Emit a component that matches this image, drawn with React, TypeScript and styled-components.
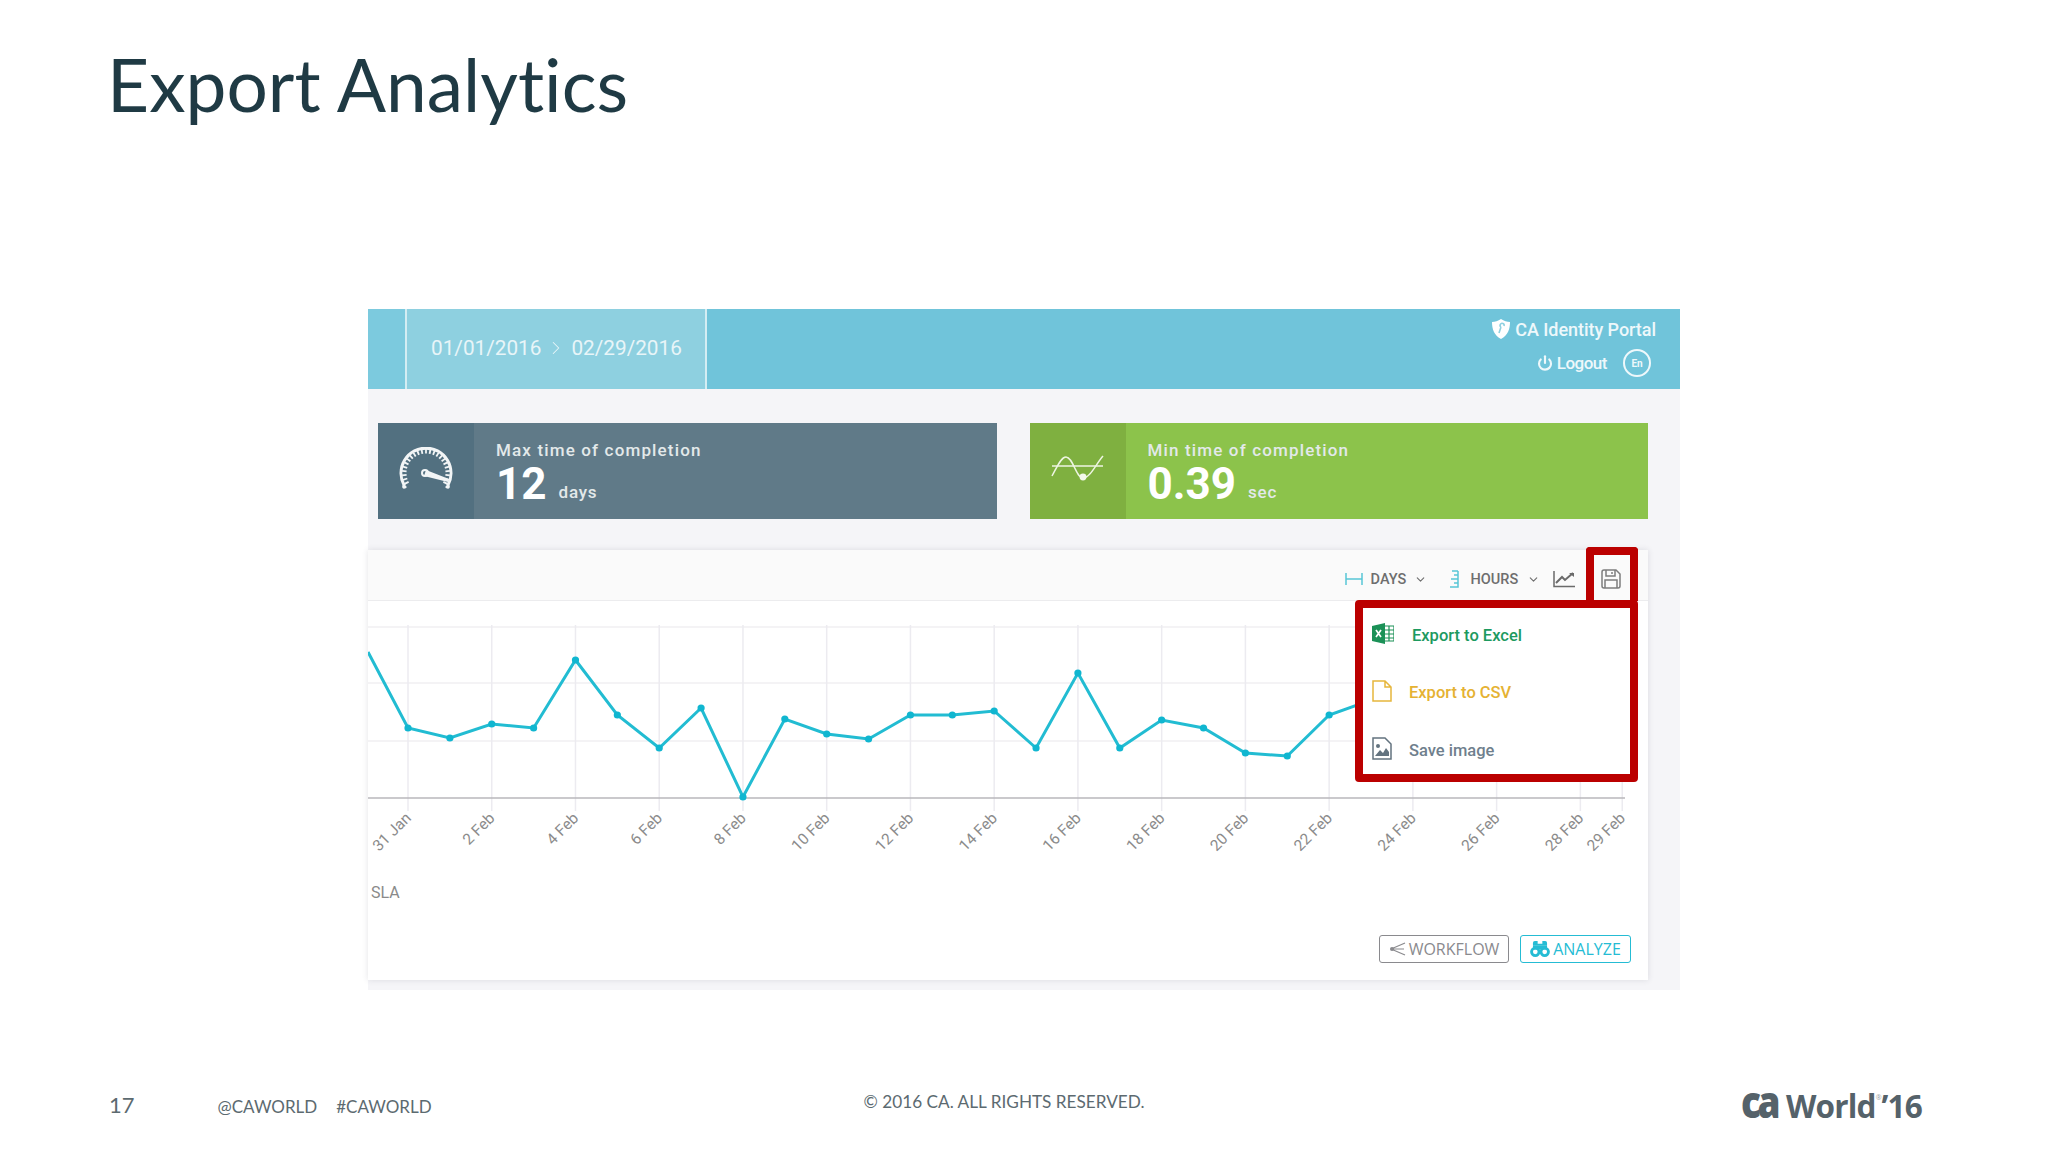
import React from "react";
import styled, { createGlobalStyle } from "styled-components";
import { ChevronDown, ChevronRight, Power } from "lucide-react";

const GlobalStyle = createGlobalStyle`
  html, body {
    margin: 0;
    padding: 0;
    background: #fff;
  }
`;

const Page = styled.div`
  width: 2048px;
  height: 1152px;
  overflow: hidden;
  display: flex;
  flex-direction: column;
  font-family: Roboto, sans-serif;
`;

const Title = styled.h1`
  margin: 36px 0 0 107px;
  font-family: Lato, sans-serif;
  font-size: 73px;
  line-height: 96px;
  font-weight: 400;
  font-variant-ligatures: none;
  color: #1f3a44;
`;

const Panel = styled.section`
  margin: 177px 0 0 368px;
  width: 1312px;
  height: 681px;
  background: #f5f5f8;
  display: flex;
  flex-direction: column;
`;

const TopBar = styled.header`
  height: 80px;
  flex: none;
  display: flex;
  justify-content: space-between;
  background: linear-gradient(to right, #7ccade 37px, #70c4da 37px);
  color: #eef8fb;
`;

const DateRange = styled.div`
  margin-left: 37px;
  width: 302px;
  box-sizing: border-box;
  padding: 0 0 2px 24px;
  display: flex;
  align-items: center;
  gap: 4px;
  background: #8ed0e0;
  border-left: 2px solid #d3edf3;
  border-right: 2px solid #d3edf3;
  font-size: 20.75px;
  color: #e8f5f8;
`;

const Account = styled.div`
  display: flex;
  flex-direction: column;
  align-items: flex-end;
  padding: 7px 24px 0 0;
  font-weight: 500;
`;

const AccountRow = styled.div<{ $top?: number; $right?: number; $size: number; $track: number }>`
  display: flex;
  align-items: center;
  gap: 4px;
  margin-top: ${(p) => p.$top ?? 0}px;
  margin-right: ${(p) => p.$right ?? 0}px;
  height: 26px;
  font-size: ${(p) => p.$size}px;
  letter-spacing: ${(p) => p.$track}px;
`;

const LangBadge = styled.span`
  width: 28px;
  height: 28px;
  box-sizing: border-box;
  margin-left: 12px;
  border: 2px solid #eef8fb;
  border-radius: 50%;
  display: flex;
  align-items: center;
  justify-content: center;
  font-size: 10px;
  font-weight: 700;
  letter-spacing: 0;
`;

const Stats = styled.div`
  display: flex;
  gap: 33px;
  margin: 34px 32px 0 10px;
  height: 96px;
  flex: none;
`;

const StatCard = styled.div<{ $bg: string }>`
  flex: 1;
  display: flex;
  background: ${(p) => p.$bg};
  color: #fff;
`;

const StatIcon = styled.div<{ $bg: string }>`
  width: 96px;
  display: flex;
  align-items: center;
  justify-content: center;
  background: ${(p) => p.$bg};
`;

const StatBody = styled.div`
  padding: 16px 0 0 22px;
`;

const StatLabel = styled.div`
  font-size: 17px;
  line-height: 22px;
  font-weight: 500;
  letter-spacing: 1.15px;
  color: #e3e9ea;
`;

const StatValue = styled.div`
  margin-top: 2px;
  display: flex;
  align-items: flex-end;
  gap: 12px;
  font-size: 44px;
  line-height: 42px;
  font-weight: 700;
`;

const StatUnit = styled.span`
  margin-bottom: 3px;
  font-size: 17px;
  line-height: 20px;
  font-weight: 500;
  letter-spacing: 0.8px;
  color: #e3e9ea;
`;

const ChartCard = styled.div`
  position: relative;
  margin: 31px 32px 0 0;
  height: 430px;
  flex: none;
  background: #fff;
  box-shadow: 0 0 6px rgba(60, 60, 80, 0.14);
  display: flex;
  flex-direction: column;
`;

const Toolbar = styled.div`
  height: 42px;
  padding: 8px 27px 0 0;
  flex: none;
  display: flex;
  align-items: center;
  justify-content: flex-end;
  background: #fafafa;
  border-bottom: 1px solid #ececee;
`;

const ToolGroup = styled.div<{ $left: number }>`
  display: flex;
  align-items: center;
  gap: 7.5px;
  margin-left: ${(p) => p.$left}px;
  font-size: 14.5px;
  font-weight: 500;
  color: #6e6e6e;
`;

const ToolLabel = styled.span<{ $left?: number; $right?: number }>`
  margin-left: ${(p) => p.$left ?? 0}px;
  margin-right: ${(p) => p.$right ?? 0}px;
`;

const ChartSvg = styled.svg`
  display: block;
  flex: none;
`;

const Sla = styled.div`
  height: 34px;
  line-height: 34px;
  flex: none;
  padding-left: 3px;
  font-size: 16px;
  color: #8a8a8a;
`;

const Actions = styled.div`
  display: flex;
  justify-content: flex-end;
  gap: 11px;
  margin-top: 25px;
  padding-right: 17px;
`;

const ActionButton = styled.button<{ $color: string; $width: number }>`
  width: ${(p) => p.$width}px;
  height: 28px;
  box-sizing: border-box;
  padding: 0;
  display: flex;
  align-items: center;
  justify-content: center;
  gap: 3px;
  background: #fff;
  border: 1.5px solid ${(p) => p.$color};
  border-radius: 3px;
  font-family: "Open Sans", sans-serif;
  font-size: 16px;
  color: ${(p) => p.$color};
`;

const SaveHighlight = styled.div`
  position: absolute;
  left: 1218px;
  top: -3px;
  width: 52px;
  height: 54px;
  box-sizing: border-box;
  border: 8px solid #bb0000;
  border-bottom: 0;
  border-radius: 4px 4px 0 0;
`;

const ExportMenu = styled.div`
  position: absolute;
  left: 987px;
  top: 50px;
  width: 283px;
  height: 182px;
  box-sizing: border-box;
  background: #fff;
  border: 8.5px solid #bb0000;
  border-radius: 4px;
  display: flex;
  flex-direction: column;
  gap: 3.5px;
`;

const MenuItem = styled.div<{ $color: string; $gap: number }>`
  height: 54px;
  flex: none;
  display: flex;
  align-items: center;
  gap: ${(p) => p.$gap}px;
  padding-left: 9px;
  font-size: 16.5px;
  font-weight: 500;
  color: ${(p) => p.$color};

  svg {
    margin-bottom: 4px;
  }
`;

const Footer = styled.footer`
  margin-top: 94px;
  padding-right: 126px;
  height: 40px;
  display: flex;
  align-items: center;
  font-family: Lato, sans-serif;
  color: #5c6a70;
`;

const PageNumber = styled.span`
  margin-left: 109px;
  font-size: 22px;
`;

const Handle = styled.span<{ $left: number }>`
  margin-left: ${(p) => p.$left}px;
  padding-top: 4px;
  font-size: 17px;
`;

const Copyright = styled.span`
  margin-left: 432px;
  font-size: 17.2px;
  padding-bottom: 6px;
`;

const Logo = styled.div`
  margin-left: auto;
  padding-bottom: 6px;
  display: flex;
  align-items: baseline;
  font-family: "Open Sans", sans-serif;
  font-weight: 700;
  font-size: 31.5px;
  letter-spacing: -0.8px;
  color: #55626a;
`;

const LogoMark = styled.span`
  display: inline-block;
  font-weight: 800;
  font-size: 44px;
  letter-spacing: -4px;
  margin-right: 9px;
  transform: scaleX(0.84);
  transform-origin: right bottom;
`;

const Registered = styled.sup`
  font-size: 7px;
  font-weight: 400;
  line-height: 0;
  vertical-align: 18px;
  letter-spacing: 0;
  color: #9aa2a6;
`;

const LEFT = 368;
const TOP = 601;
const STEP = 41.87;
const values = [
  728, 738, 724, 728, 660, 715, 748, 708, 797, 719, 734, 739, 715, 715, 711, 748,
  673, 748, 720, 728, 753, 756, 715, 700, 720, 735, 710, 725, 740, 730,
];
const gridRows = [627, 683, 741];
const tickLabels = [
  "31 Jan", "2 Feb", "4 Feb", "6 Feb", "8 Feb", "10 Feb", "12 Feb", "14 Feb",
  "16 Feb", "18 Feb", "20 Feb", "22 Feb", "24 Feb", "26 Feb", "28 Feb",
];

const dayX = (i: number) => 408 - LEFT + STEP * i;

const Chart = () => {
  const line = values.map((v, i) => `${dayX(i)},${v - TOP}`).join(" ");
  const ticks = [...tickLabels.map((t, i) => ({ t, i: i * 2 })), { t: "29 Feb", i: 29 }];
  return (
    <ChartSvg width="1280" height="275" viewBox="0 0 1280 275">
      {gridRows.map((y) => (
        <line key={y} x1="0" x2="1265" y1={y - TOP} y2={y - TOP} stroke="#e9e8ec" strokeWidth="1.2" />
      ))}
      {ticks.map(({ i }) => (
        <line key={i} x1={dayX(i)} x2={dayX(i)} y1={24} y2={210} stroke="#ecebf0" strokeWidth="1.5" />
      ))}
      <line x1="0" x2="1257" y1={197} y2={197} stroke="#b9b7bb" strokeWidth="1.6" />
      <polyline points={`0,51 ${line}`} fill="none" stroke="#22bcd2" strokeWidth="3" />
      {values.map((v, i) => (
        <circle key={i} cx={dayX(i)} cy={v - TOP} r="3.6" fill="#10b6d0" />
      ))}
      {ticks.map(({ t, i }) => (
        <text
          key={t}
          x={dayX(i) + 4}
          y={218}
          transform={`rotate(-45 ${dayX(i) + 4} 218)`}
          textAnchor="end"
          fontFamily="Roboto, sans-serif"
          fontSize="15.5"
          fill="#8b8b8b"
        >
          {t}
        </text>
      ))}
    </ChartSvg>
  );
};

const GaugeIcon = () => {
  const marks = Array.from({ length: 23 }, (_, i) => -207 + (i * 234) / 22);
  return (
    <svg width="56" height="48" viewBox="-28 -26 56 48" fill="none" stroke="#f2f5f6">
      <path d="M-21 14 Q-23 15 -22 12 A25 25 0 1 1 22 12 Q23 15 21 14" strokeWidth="3" strokeLinecap="round" />
      {marks.map((a) => {
        const r = (a * Math.PI) / 180;
        return (
          <line
            key={a}
            x1={Math.cos(r) * 24}
            y1={Math.sin(r) * 24}
            x2={Math.cos(r) * 19.5}
            y2={Math.sin(r) * 19.5}
            strokeWidth="1.8"
          />
        );
      })}
      <circle cx="-1" cy="0" r="3" strokeWidth="2" />
      <path d="M0 -3 L23 6 L22 9 L-2 3 Z" fill="#f2f5f6" stroke="none" />
    </svg>
  );
};

const WaveIcon = () => (
  <svg width="56" height="32" viewBox="0 0 56 32" fill="none" stroke="#eef5e2" strokeWidth="1.5">
    <path d="M2 21 C7 12 11 2 16 2 C23 2 26 23 33 23 C40 23 46 9 53 1" />
    <path d="M2 11 H53" />
    <circle cx="33" cy="22" r="3.4" fill="#f4f9ec" stroke="none" />
  </svg>
);

const ShieldIcon = () => (
  <svg width="20" height="20" viewBox="0 0 20 20">
    <path d="M10 0 C13 2 16 3 19 3 C19 10 17 16 10 20 C3 16 1 10 1 3 C4 3 7 2 10 0 Z" fill="#fff" />
    <path d="M8 14 L10 8 M10 8 A2 2 0 1 1 13 7" stroke="#8ed0e0" strokeWidth="1.6" fill="none" />
  </svg>
);

const DaysIcon = () => (
  <svg width="18" height="14" viewBox="0 0 18 14" fill="none" stroke="#58c6d6" strokeWidth="1.5">
    <path d="M1 1 V13 M17 1 V13 M1 7 H17" />
  </svg>
);

const HoursIcon = () => (
  <svg width="11" height="18" viewBox="0 0 11 18" fill="none" stroke="#58c6d6" strokeWidth="1.5">
    <path d="M10 1 V17 H2 M4 1 H10 M6 5 H10 M3 9 H10 M6 13 H10" />
  </svg>
);

const TrendIcon = () => (
  <svg width="22" height="18" viewBox="0 0 22 18" fill="none" stroke="#6a6a6a" strokeWidth="1.5">
    <path d="M1 1 V16.5 H22" />
    <path d="M3 13 L9 7 L12 10 L20 3" strokeWidth="2" />
    <path d="M16 3 H21 V7" fill="#6a6a6a" stroke="none" />
  </svg>
);

const SaveIcon = () => (
  <svg width="20" height="20" viewBox="0 0 20 20" fill="none" stroke="#7d7d7d" strokeWidth="1.5">
    <path d="M1 3 Q1 1 3 1 H15 L19 5 V17 Q19 19 17 19 H3 Q1 19 1 17 Z" />
    <path d="M5 1 V7 H14 V1 M11 3 V5" />
    <path d="M4 19 V11 H16 V19" />
  </svg>
);

const ExcelIcon = () => (
  <svg width="22" height="21" viewBox="0 0 22 21">
    <path d="M0 3 L13 0 V21 L0 18 Z" fill="#1b9157" />
    <path d="M4 7 L9 14 M9 7 L4 14" stroke="#fff" strokeWidth="1.7" />
    <path d="M13 3 H22 V18 H13 M13 7 H22 M13 11 H22 M13 15 H22 M17 3 V18" fill="none" stroke="#1b9157" strokeWidth="1.2" />
  </svg>
);

const CsvIcon = () => (
  <svg width="20" height="22" viewBox="0 0 20 22" fill="none" stroke="#e6b63c" strokeWidth="1.5">
    <path d="M1 1 H13 L19 7 V21 H1 Z M13 1 V7 H19" />
  </svg>
);

const ImageFileIcon = () => (
  <svg width="20" height="23" viewBox="0 0 20 23" fill="none" stroke="#63737f" strokeWidth="1.5">
    <path d="M1 1 H13 L19 7 V22 H1 Z" />
    <circle cx="6" cy="9" r="2" fill="#63737f" stroke="none" />
    <path d="M3 19 L8 13 L11 16 L14 11 L17 15 V19 Z" fill="#63737f" stroke="none" />
  </svg>
);

const BranchIcon = () => (
  <svg width="17" height="14" viewBox="0 0 17 14" fill="none" stroke="#8a8a8e" strokeWidth="1.2">
    <path d="M2 7 L16 1 M2 7 H15 M2 7 L16 13" />
    <circle cx="3" cy="7" r="2" fill="#8a8a8e" stroke="none" />
  </svg>
);

const BinocularsIcon = () => (
  <svg width="20" height="16" viewBox="0 0 21 17" fill="#25bcd4" fillRule="evenodd">
    <path d="M3 2 Q3 0 5 0 H8 V3 H13 V0 H16 Q18 0 18 2 L18 5 H3 Z" />
    <path d="M5.5 6 A5.5 5.5 0 1 1 5.5 17 A5.5 5.5 0 1 1 5.5 6 Z M5.5 9 A2.5 2.5 0 1 0 5.5 14 A2.5 2.5 0 1 0 5.5 9 Z" />
    <path d="M15.5 6 A5.5 5.5 0 1 1 15.5 17 A5.5 5.5 0 1 1 15.5 6 Z M15.5 9 A2.5 2.5 0 1 0 15.5 14 A2.5 2.5 0 1 0 15.5 9 Z" />
    <path d="M3 5 H18 V9 H3 Z" />
  </svg>
);

export default function App() {
  return (
    <Page>
      <GlobalStyle />
      <Title>Export Analytics</Title>
      <Panel>
        <TopBar>
          <DateRange>
            01/01/2016
            <ChevronRight size={22} strokeWidth={1.1} />
            02/29/2016
          </DateRange>
          <Account>
            <AccountRow $size={18} $track={-0.05}>
              <ShieldIcon />
              CA Identity Portal
            </AccountRow>
            <AccountRow $top={8} $right={5} $size={17} $track={-0.5}>
              <Power size={16} strokeWidth={3.2} />
              Logout
              <LangBadge>En</LangBadge>
            </AccountRow>
          </Account>
        </TopBar>

        <Stats>
          <StatCard $bg="#607a88">
            <StatIcon $bg="#527080">
              <GaugeIcon />
            </StatIcon>
            <StatBody>
              <StatLabel>Max time of completion</StatLabel>
              <StatValue>
                12 <StatUnit>days</StatUnit>
              </StatValue>
            </StatBody>
          </StatCard>
          <StatCard $bg="#8cc34b">
            <StatIcon $bg="#7fb040">
              <WaveIcon />
            </StatIcon>
            <StatBody>
              <StatLabel>Min time of completion</StatLabel>
              <StatValue>
                0.39 <StatUnit>sec</StatUnit>
              </StatValue>
            </StatBody>
          </StatCard>
        </Stats>

        <ChartCard>
          <Toolbar>
            <ToolGroup $left={0}>
              <DaysIcon />
              DAYS
              <ChevronDown size={13} />
            </ToolGroup>
            <ToolGroup $left={21}>
              <HoursIcon />
              <ToolLabel $left={4.3} $right={1.3}>HOURS</ToolLabel>
              <ChevronDown size={13} />
            </ToolGroup>
            <ToolGroup $left={13}>
              <TrendIcon />
            </ToolGroup>
            <ToolGroup $left={26}>
              <SaveIcon />
            </ToolGroup>
          </Toolbar>
          <Chart />
          <Sla>SLA</Sla>
          <Actions>
            <ActionButton $color="#8a8a8e" $width={130}>
              <BranchIcon />
              WORKFLOW
            </ActionButton>
            <ActionButton $color="#25bcd4" $width={111}>
              <BinocularsIcon />
              ANALYZE
            </ActionButton>
          </Actions>
          <SaveHighlight />
          <ExportMenu>
            <MenuItem $color="#1d9a5f" $gap={18}>
              <ExcelIcon />
              Export to Excel
            </MenuItem>
            <MenuItem $color="#e5b233" $gap={17}>
              <CsvIcon />
              Export to CSV
            </MenuItem>
            <MenuItem $color="#6f7f8d" $gap={17}>
              <ImageFileIcon />
              Save image
            </MenuItem>
          </ExportMenu>
        </ChartCard>
      </Panel>
      <Footer>
        <PageNumber>17</PageNumber>
        <Handle $left={83}>@CAWORLD</Handle>
        <Handle $left={19}>#CAWORLD</Handle>
        <Copyright>© 2016 CA. ALL RIGHTS RESERVED.</Copyright>
        <Logo>
          <LogoMark>ca</LogoMark>
          <span>
            World<Registered>®</Registered>’16
          </span>
        </Logo>
      </Footer>
    </Page>
  );
}
